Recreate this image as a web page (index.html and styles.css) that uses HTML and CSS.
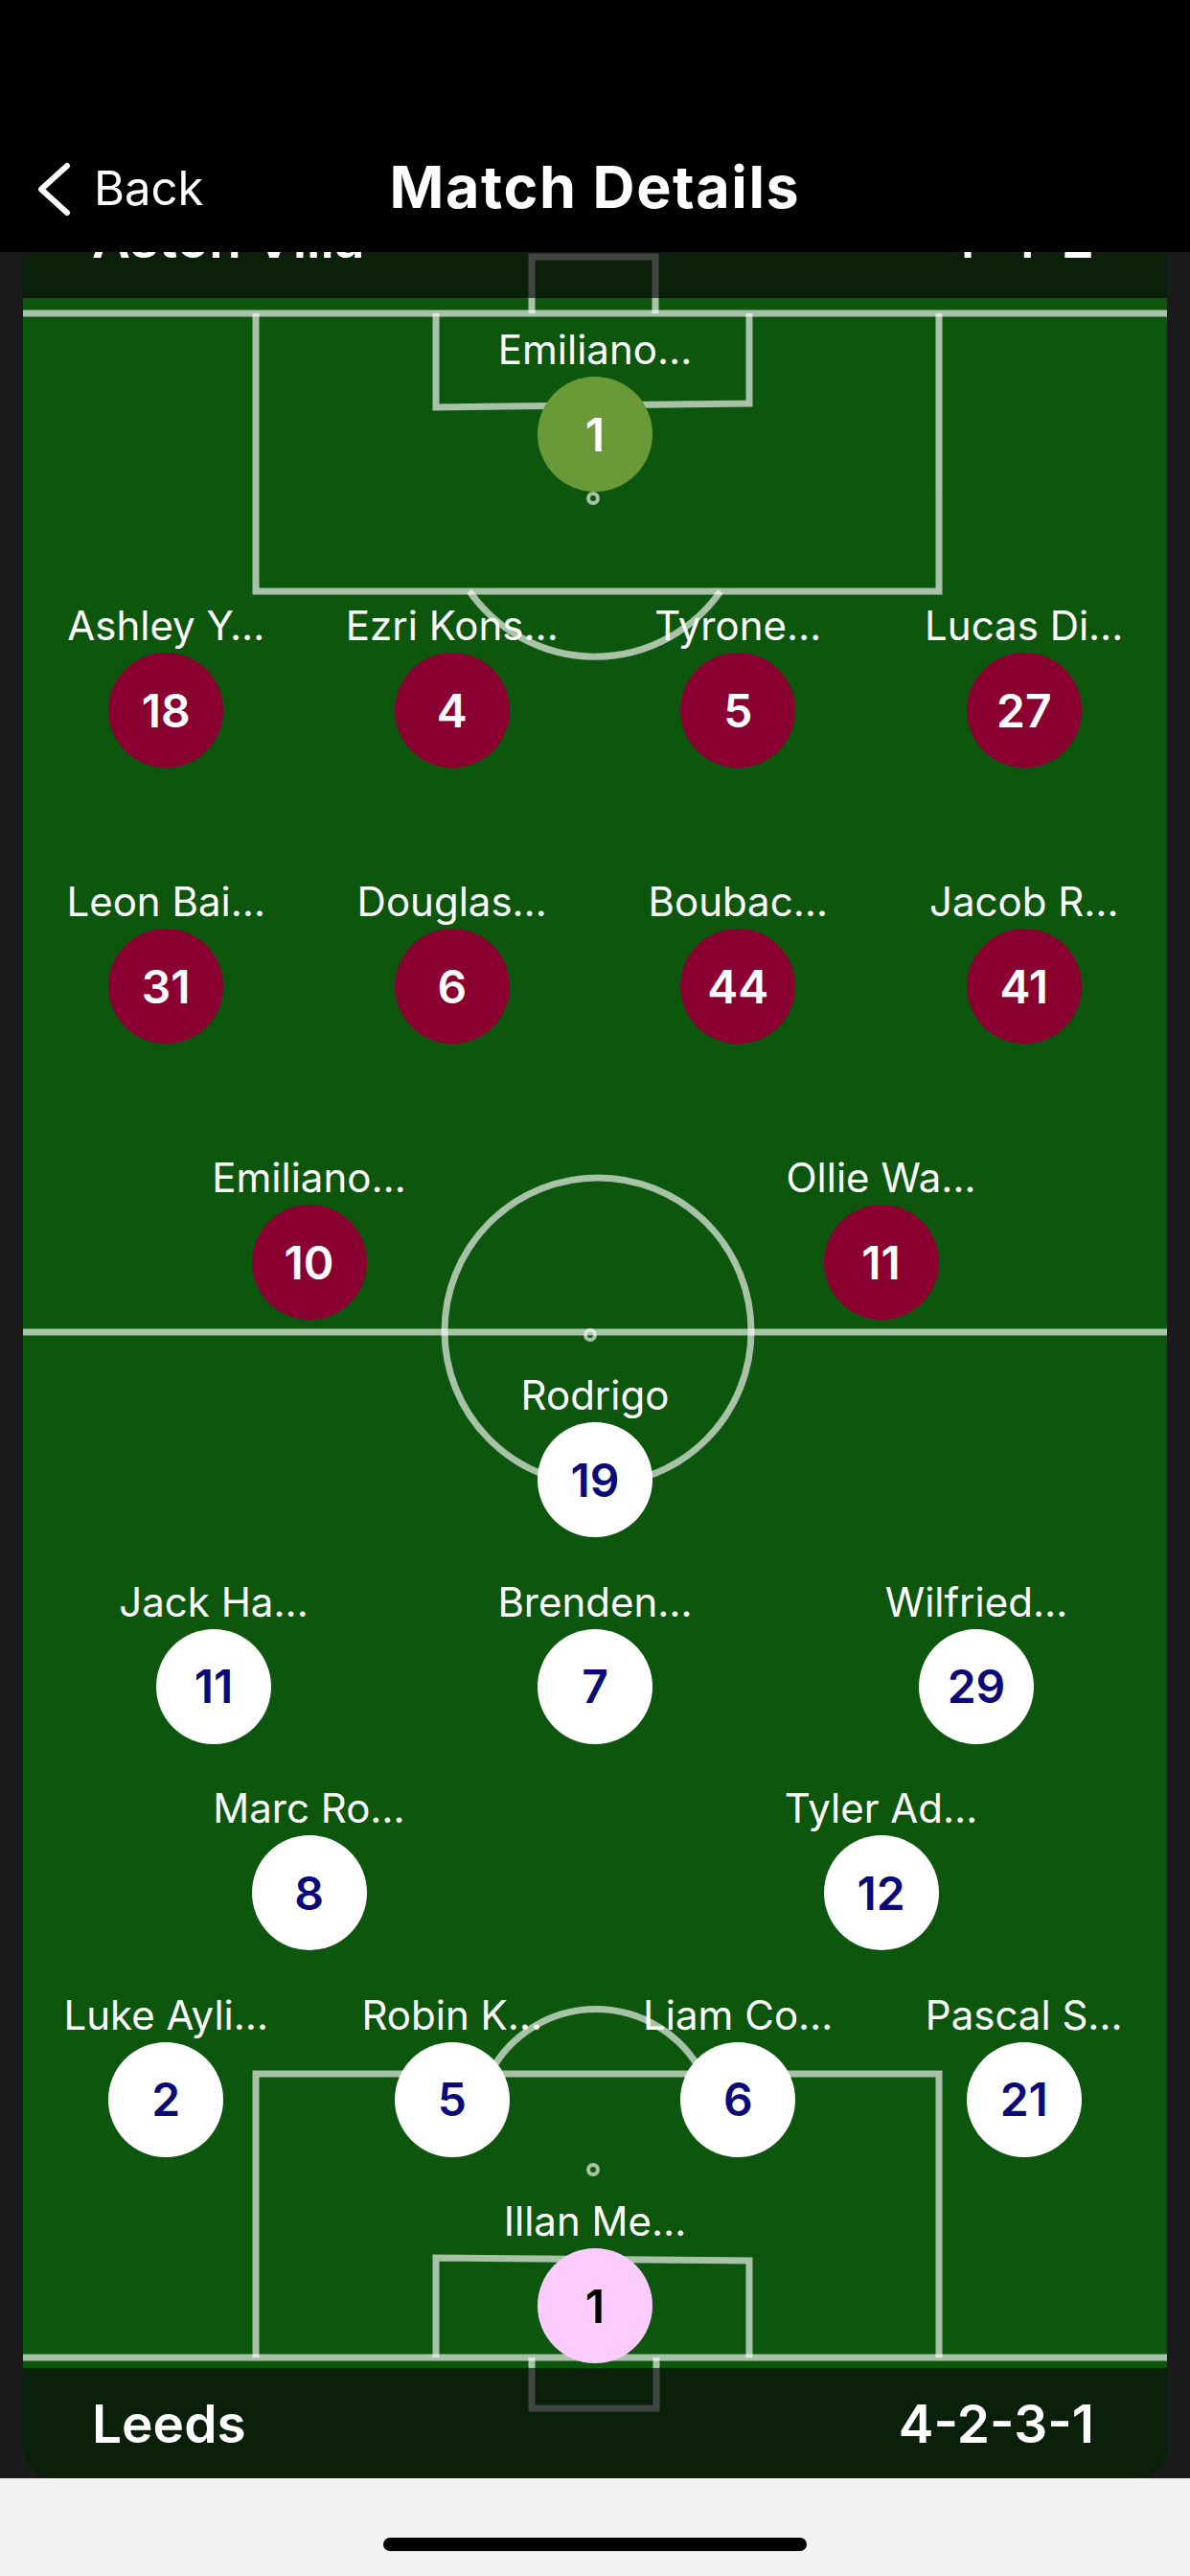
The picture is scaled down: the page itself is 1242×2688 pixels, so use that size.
FILE: index.html
```html
<!DOCTYPE html>
<html lang="en">
<head>
<meta charset="utf-8">
<title>Match Details</title>
<link rel="stylesheet" href="styles.css">
</head>
<body>
<header class="nav">
  <div class="nav-row">
    <div class="back">
      <svg class="chevron" viewBox="0 0 40 62" width="40" height="62" aria-hidden="true">
        <polyline points="33,7 6,31.5 33,56" fill="none" stroke="#fff" stroke-width="6" stroke-linecap="round" stroke-linejoin="round"/>
      </svg>
      <span class="back-label">Back</span>
    </div>
    <h1 class="title">Match Details</h1>
    <div class="spacer"></div>
  </div>
</header>

<main class="scroll">
  <section class="card">
    <svg class="pitch-art" viewBox="0 0 1194 2390" width="1194" height="2390" aria-hidden="true">
      <rect x="0" y="0" width="1194" height="2390" fill="#0c570d"/>
      <g fill="none" stroke="#fff" stroke-opacity="0.64" stroke-width="7">
        <line x1="0" y1="131" x2="1194" y2="131"/>
        <path d="M243 131 V421 H956 V131"/>
        <path d="M431 131 V229 L758 225 V131"/>
        <path d="M466 421 A160 160 0 0 0 728 421"/>
        <path d="M531 131 V72 H660 V131"/>
        <line x1="0" y1="1194" x2="1194" y2="1194"/>
        <circle cx="600" cy="1193" r="160"/>
        <line x1="0" y1="2264" x2="1194" y2="2264"/>
        <path d="M243 2264 V1968 H956 V2264"/>
        <path d="M431 2264 V2160 L758 2163 V2264"/>
        <path d="M487 1968 A125 125 0 0 1 709 1968"/>
        <path d="M531 2264 V2317 H661 V2264"/>
      </g>
      <g fill="none" stroke="#fff" stroke-opacity="0.64" stroke-width="4">
        <circle cx="595" cy="324" r="5"/>
        <circle cx="592" cy="1197" r="5"/>
        <circle cx="595" cy="2068" r="5"/>
      </g>
      <rect x="0" y="0" width="1194" height="115" fill="rgb(10,4,10)" fill-opacity="0.66"/>
      <rect x="0" y="2275" width="1194" height="115" fill="rgb(10,4,10)" fill-opacity="0.66"/>
    </svg>

    <div class="band band-top">
      <span class="team">Aston Villa</span>
      <span class="formation">4-4-2</span>
    </div>

    <div class="pitch">
      <div class="half home">
        <div class="row">
          <div class="player"><span class="name">Emiliano…</span><span class="shirt villa-gk">1</span></div>
        </div>
        <div class="row">
          <div class="player"><span class="name">Ashley Y…</span><span class="shirt villa">18</span></div>
          <div class="player"><span class="name">Ezri Kons…</span><span class="shirt villa">4</span></div>
          <div class="player"><span class="name">Tyrone…</span><span class="shirt villa">5</span></div>
          <div class="player"><span class="name">Lucas Di…</span><span class="shirt villa">27</span></div>
        </div>
        <div class="row">
          <div class="player"><span class="name">Leon Bai…</span><span class="shirt villa">31</span></div>
          <div class="player"><span class="name">Douglas…</span><span class="shirt villa">6</span></div>
          <div class="player"><span class="name">Boubac…</span><span class="shirt villa">44</span></div>
          <div class="player"><span class="name">Jacob R…</span><span class="shirt villa">41</span></div>
        </div>
        <div class="row">
          <div class="player"><span class="name">Emiliano…</span><span class="shirt villa">10</span></div>
          <div class="player"><span class="name">Ollie Wa…</span><span class="shirt villa">11</span></div>
        </div>
      </div>

      <div class="half away">
        <div class="row">
          <div class="player"><span class="name">Rodrigo</span><span class="shirt leeds">19</span></div>
        </div>
        <div class="row">
          <div class="player"><span class="name">Jack Ha…</span><span class="shirt leeds">11</span></div>
          <div class="player"><span class="name">Brenden…</span><span class="shirt leeds">7</span></div>
          <div class="player"><span class="name">Wilfried…</span><span class="shirt leeds">29</span></div>
        </div>
        <div class="row">
          <div class="player"><span class="name">Marc Ro…</span><span class="shirt leeds">8</span></div>
          <div class="player"><span class="name">Tyler Ad…</span><span class="shirt leeds">12</span></div>
        </div>
        <div class="row">
          <div class="player"><span class="name">Luke Ayli…</span><span class="shirt leeds">2</span></div>
          <div class="player"><span class="name">Robin K…</span><span class="shirt leeds">5</span></div>
          <div class="player"><span class="name">Liam Co…</span><span class="shirt leeds">6</span></div>
          <div class="player"><span class="name">Pascal S…</span><span class="shirt leeds">21</span></div>
        </div>
        <div class="row">
          <div class="player"><span class="name">Illan Me…</span><span class="shirt leeds-gk">1</span></div>
        </div>
      </div>
    </div>

    <div class="band band-bottom">
      <span class="team">Leeds</span>
      <span class="formation">4-2-3-1</span>
    </div>
  </section>
</main>

<footer class="home-bar">
  <span class="indicator"></span>
</footer>
</body>
</html>
```

FILE: styles.css
```css
* {
  box-sizing: border-box;
  margin: 0;
  padding: 0;
}

html, body {
  width: 1242px;
  height: 2688px;
}

body {
  background: #f2f2f2;
  color: #fff;
  font-family: Inter, "Noto Sans", "DejaVu Sans", sans-serif;
  overflow: hidden;
  display: flex;
  flex-direction: column;
}

/* ---------- navigation header ---------- */
.nav {
  flex: none;
  height: 263px;
  background: #000;
  padding-top: 131px;
}

.nav-row {
  height: 132px;
  display: grid;
  grid-template-columns: 1fr auto 1fr;
  align-items: center;
}

.back {
  display: flex;
  align-items: center;
  gap: 21px;
  padding-left: 37px;
}

.chevron {
  display: block;
  flex: none;
}

.back-label {
  font-size: 49px;
  font-weight: 400;
  line-height: 62px;
}

.title {
  font-size: 61px;
  font-weight: 700;
  line-height: 72px;
  margin-bottom: 5px;
  letter-spacing: 1.6px;
}

/* ---------- scrolled content ---------- */
.scroll {
  flex: none;
  height: 2323px;
  overflow: hidden;
  background: #1b1b1b;
  padding: 0 24px;
}

.card {
  position: relative;
  margin-top: -67px;
  height: 2390px;
  border-radius: 30px;
  overflow: hidden;
  display: flex;
  flex-direction: column;
}

.pitch-art {
  position: absolute;
  left: 0;
  top: 0;
  display: block;
}

.band {
  position: relative;
  flex: none;
  height: 115px;
  display: flex;
  justify-content: space-between;
  align-items: center;
  padding: 0 76px 0 72px;
  font-size: 55px;
  font-weight: 600;
}

.band-top {
  padding-bottom: 9px;
}

.pitch {
  position: relative;
  flex: none;
  height: 2160px;
  padding-top: 29px;
  display: flex;
  flex-direction: column;
}

.half {
  display: flex;
  flex-direction: column;
}

.home {
  gap: 115px;
}

.away {
  gap: 42.5px;
  margin-top: 54px;
}

.row {
  display: flex;
}

.player {
  flex: 1 1 0;
  min-width: 0;
  display: flex;
  flex-direction: column;
  align-items: center;
}

.name {
  font-size: 42px;
  line-height: 50px;
  height: 50px;
  margin-bottom: 3px;
  white-space: nowrap;
  color: #fff;
}

.shirt {
  width: 120px;
  height: 120px;
  border-radius: 50%;
  display: flex;
  align-items: center;
  justify-content: center;
  font-size: 48px;
  font-weight: 600;
}

.villa {
  background: #8a0030;
  color: #fff;
}

.villa-gk {
  background: #699a37;
  color: #fff;
}

.leeds {
  background: #fff;
  color: #0a0a78;
}

.leeds-gk {
  background: #fdccff;
  color: #000;
}

/* ---------- home indicator ---------- */
.home-bar {
  flex: none;
  height: 102px;
  background: #f2f2f2;
  display: flex;
  justify-content: center;
  padding-top: 62px;
}

.indicator {
  width: 442px;
  height: 14px;
  border-radius: 7px;
  background: #000;
}
```
